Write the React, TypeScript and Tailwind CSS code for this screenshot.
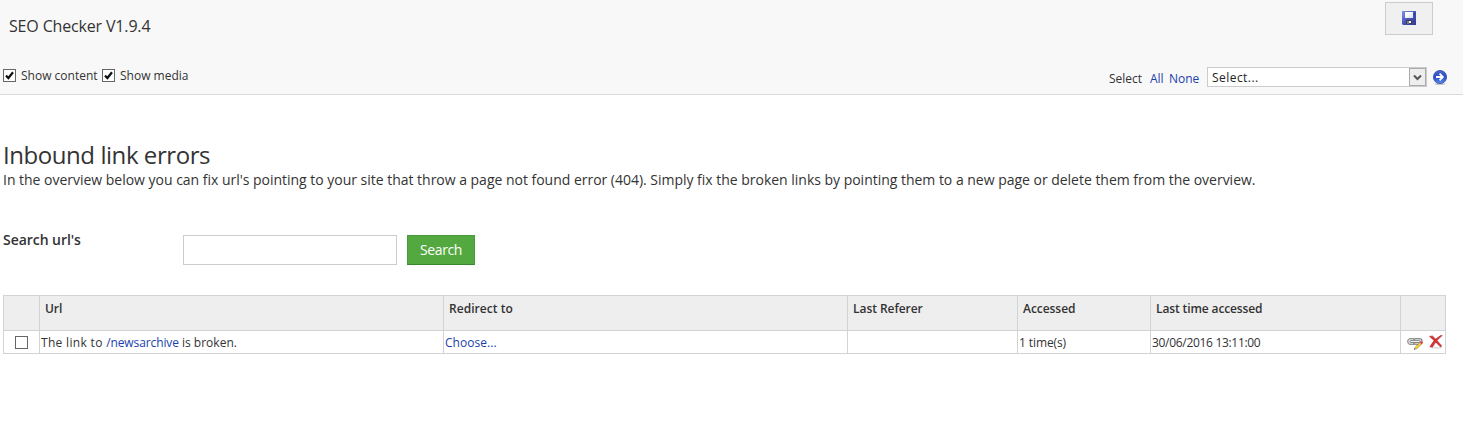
import React from "react";

function CheckBox({ checked }: { checked?: boolean }) {
  return (
    <span role="checkbox" aria-checked={!!checked} className="block h-[13px] w-[13px] shrink-0 border border-[#666] bg-white">
      {checked && (
        <svg viewBox="0 0 11 11" className="block h-[11px] w-[11px]">
          <path d="M2 5.6 4.4 8 9 2.2" fill="none" stroke="#111" strokeWidth="2.2" />
        </svg>
      )}
    </span>
  );
}

function DiskIcon() {
  return (
    <svg width="14" height="14" viewBox="0 0 14 14" className="block">
      <defs>
        <linearGradient id="disk" x1="0" y1="0" x2="1" y2="1">
          <stop offset="0" stopColor="#8296e6" />
          <stop offset="0.5" stopColor="#4a53bb" />
          <stop offset="1" stopColor="#343795" />
        </linearGradient>
        <linearGradient id="label" x1="0" y1="0" x2="1" y2="1">
          <stop offset="0.3" stopColor="#fff" />
          <stop offset="1" stopColor="#cfdcf5" />
        </linearGradient>
      </defs>
      <path d="M0 0h14v14H1L0 13z" fill="url(#disk)" />
      <path d="M3 1h8v6H3z" fill="url(#label)" />
      <path d="M12 2h1v2h-1z" fill="#27307a" />
      <path d="M4 9h6v4H4z" fill="#3c3f58" />
      <path d="M5 10h2v3H5z" fill="#777d88" />
      <path d="M7 10h2v2H7z" fill="#f2f4e8" />
    </svg>
  );
}

function ArrowIcon() {
  return (
    <svg width="16" height="16" viewBox="0 0 16 16" className="block">
      <defs>
        <linearGradient id="go" x1="0" y1="0" x2="0" y2="1">
          <stop offset="0" stopColor="#4a68c8" />
          <stop offset="0.5" stopColor="#2a4cc4" />
          <stop offset="1" stopColor="#5c8cf0" />
        </linearGradient>
      </defs>
      <ellipse cx="8" cy="14.9" rx="5.5" ry="1" fill="#c9c9c9" />
      <circle cx="8" cy="8" r="6.6" fill="url(#go)" stroke="#2f4fb4" strokeWidth="0.8" />
      <path d="M4 8h6.5M7.6 4.7 10.9 8l-3.3 3.3" fill="none" stroke="#fff" strokeWidth="1.8" />
    </svg>
  );
}

function EditLinkIcon() {
  return (
    <svg width="16" height="16" viewBox="0 0 16 16" className="block">
      <rect x="0.7" y="3.6" width="8.8" height="5.8" rx="2.8" fill="#e6e6e6" stroke="#969696" strokeWidth="1.2" />
      <rect x="6.3" y="3.6" width="8.8" height="5.8" rx="2.8" fill="#e6e6e6" stroke="#8c8c8c" strokeWidth="1.2" />
      <rect x="3" y="5.6" width="10" height="1.9" rx="0.9" fill="#fff" stroke="#777" strokeWidth="0.9" />
      <path d="M8.5 13.5 14 8" stroke="#a68c38" strokeWidth="2.7" />
      <path d="M8.6 13.4 13.8 8.2" stroke="#f5d83c" strokeWidth="1.6" />
      <path d="m13.7 8.3 1.4-1.4" stroke="#df3c48" strokeWidth="2.7" />
      <path d="m7 14.8.5-1.8 1.3 1.3z" fill="#333" />
    </svg>
  );
}

function DeleteIcon() {
  return (
    <svg width="14" height="14" viewBox="0 0 14 14" className="block">
      <ellipse cx="7.5" cy="12.7" rx="6" ry="0.8" fill="#ddd" />
      <path d="M.5 1.4 3.4.9Q8 4.8 12.8 11L11.6 12.1Q6 6 .5 1.4Z" fill="#d83434" stroke="#a91f22" strokeWidth="0.5" />
      <path d="M13.3.4Q7 5.3 3.5 12.2L.8 11.8Q4.3 5 11.5.6Z" fill="#d63a36" stroke="#a91f22" strokeWidth="0.5" />
    </svg>
  );
}

const head = "bg-[#eee] pl-[5px] pt-[5px] text-[12px] font-semibold leading-4 tracking-[-0.05px]";
const cell = "bg-white pl-px pt-1 text-[12px] leading-4";

export default function App() {
  return (
    <div className="h-[435px] w-[1463px] overflow-hidden bg-white font-['Open_Sans','Noto_Sans',sans-serif] text-[#333] whitespace-nowrap">
      <header className="flex h-[95px] justify-between border-b border-[#d9d9d9] bg-[#f8f8f8]">
        <div className="flex flex-col">
          <h1 className="mt-[15px] h-[22px] pl-[9px] text-[16px] leading-[22px] tracking-[-0.16px]">SEO Checker V1.9.4</h1>
          <div className="mt-[29px] flex h-[18px] items-center pl-[3px] text-[12px] leading-[18px]">
            <CheckBox checked />
            <span className="ml-[5px] mt-px w-[81px]">Show content</span>
            <CheckBox checked />
            <span className="ml-[5px] mt-px">Show media</span>
          </div>
        </div>
        <div className="flex flex-col items-end">
          <button aria-label="Save" className="mt-[2px] mr-[30px] flex h-[33px] w-[48px] justify-center border border-[#ccc] bg-[#f0f0f0] pt-2">
            <DiskIcon />
          </button>
          <div className="mt-8 flex h-5 text-[12px] leading-[23px]">
            <span className="w-[41px]">Select</span>
            <a className="w-[19px] text-[#1a3fad]">All</a>
            <a className="w-[38px] text-[#1a3fad]">None</a>
            <div className="flex h-5 w-[220px] justify-between border border-[#ccc] bg-white pl-1 leading-[20px] text-[#222]">
              <span className="tracking-[0.45px]">Select...</span>
              <span className="flex h-[18px] w-[17px] items-center justify-center border border-[#aaa] bg-[#eee]">
                <svg width="9" height="7" viewBox="0 0 9 7"><path d="m1 1.5 3.5 3.5L8 1.5" fill="none" stroke="#555" strokeWidth="2" /></svg>
              </span>
            </div>
            <span className="ml-[5px] mr-[15px] mt-[2px]"><ArrowIcon /></span>
          </div>
        </div>
      </header>
      <main className="pl-[3px]">
        <h2 className="pt-11 text-[24px] leading-[32px] tracking-[-0.44px]">Inbound link errors</h2>
        <p className="h-5 text-[14px] leading-[18px] tracking-[-0.018px]">In the overview below you can fix url's pointing to your site that throw a page not found error (404). Simply fix the broken links by pointing them to a new page or delete them from the overview.</p>
        <div className="mt-11 flex h-[30px]">
          <label className="w-[180px] text-[14px] font-semibold leading-[10px] tracking-[-0.05px]">Search url's</label>
          <input aria-label="Search url's" className="h-[30px] w-[214px] border border-[#ccc] bg-white" />
          <button className="ml-[10px] h-[30px] w-[68px] border border-[#48993a] border-b-[#39842e] bg-[#53a93f] text-[14px] leading-[28px] tracking-[-0.4px] text-white">Search</button>
        </div>
        <div className="mt-[30px] grid w-[1443px] grid-cols-[35px_403px_403px_169px_132px_249px_44px] grid-rows-[34px_22px] gap-px bg-[#d2d3d6] p-px">
          <div className={head} />
          <div className={head}>Url</div>
          <div className={head}><span className="tracking-[0.05px]">Redirect to</span></div>
          <div className={head}>Last Referer</div>
          <div className={head}>Accessed</div>
          <div className={head}><span className="tracking-[-0.12px]">Last time accessed</span></div>
          <div className={head} />
          <div className="bg-white pl-[11px] pt-[5px]"><CheckBox /></div>
          <div className={cell}><span className="tracking-[0.32px]">The link to </span><a className="text-[#1a3fad] tracking-[-0.1px]">/newsarchive</a> is broken.</div>
          <div className={cell}><a className="text-[#1a3fad] tracking-[0.05px]">Choose...</a></div>
          <div className={cell} />
          <div className={cell}><span className="tracking-[-0.1px]">1 time(s)</span></div>
          <div className={cell}><span className="tracking-[-0.31px]">30/06/2016 13:11:00</span></div>
          <div className="flex bg-white pl-[6px] pt-1">
            <EditLinkIcon />
            <span className="ml-[6px]"><DeleteIcon /></span>
          </div>
        </div>
      </main>
    </div>
  );
}
